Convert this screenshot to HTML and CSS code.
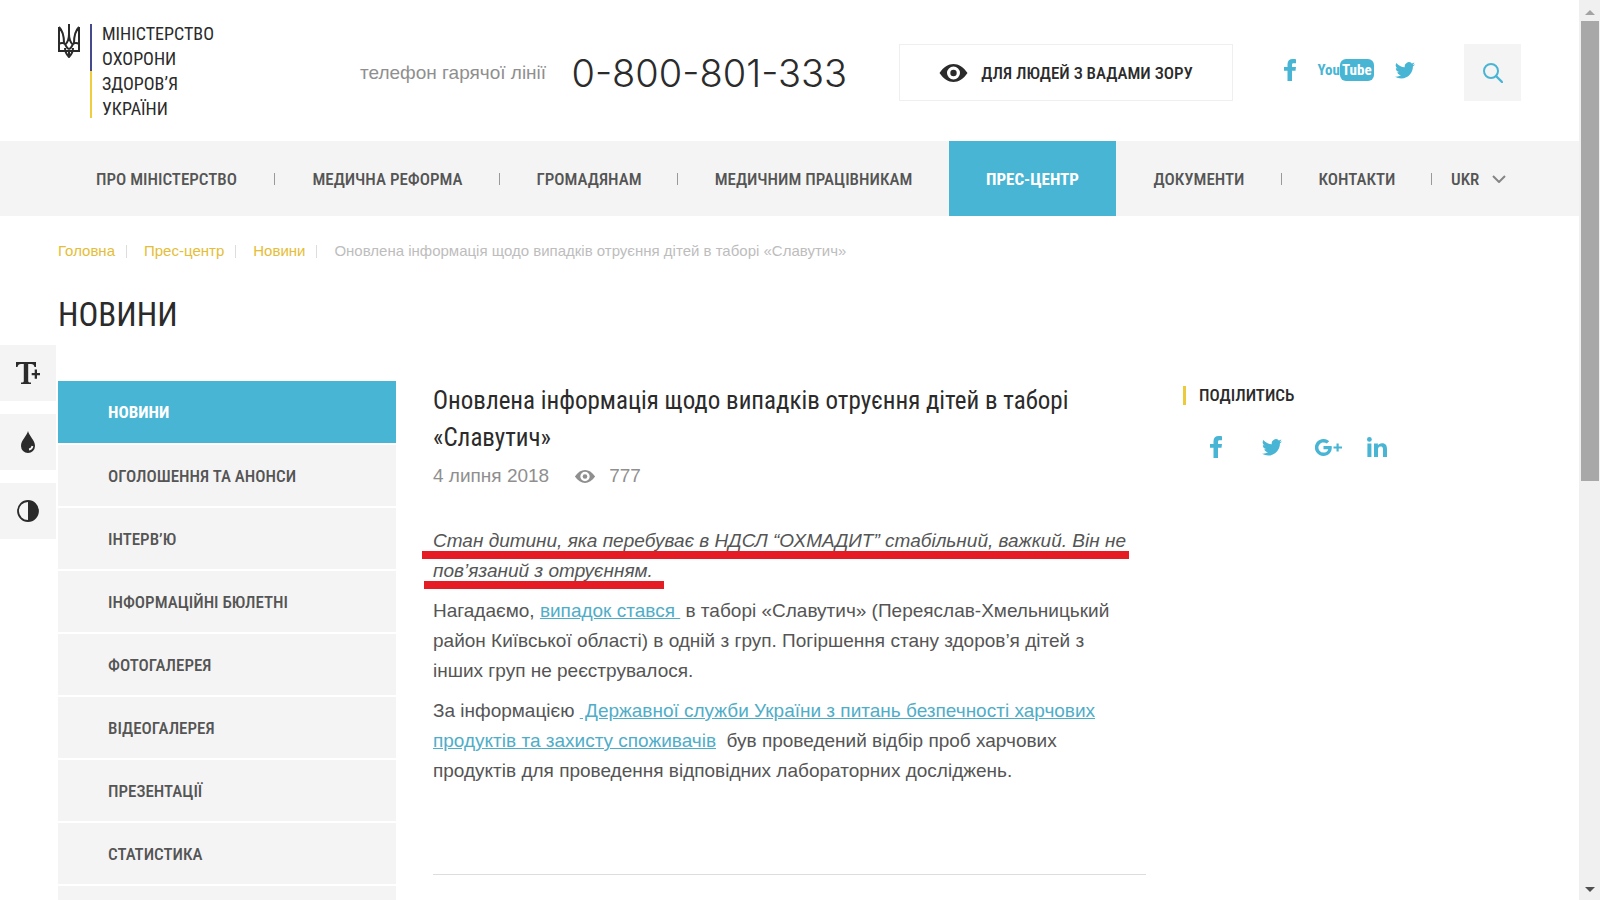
FILE: index.html
```html
<!DOCTYPE html>
<html lang="uk">
<head>
<meta charset="utf-8">
<meta name="viewport" content="width=device-width, initial-scale=1">
<title>Новини</title>
<link rel="stylesheet" href="styles.css">
</head>
<body>
<svg class="sprite" aria-hidden="true">
  <symbol id="i-eye" viewBox="0 0 28 18"><path fill-rule="evenodd" d="M0 9C4 3 9 0 14 0s10 3 14 9c-4 6-9 9-14 9S4 15 0 9zm14-6.500a6.500 6.500 0 1 0 0 13 6.500 6.500 0 0 0 0-13z"/><circle cx="14" cy="9" r="3.200"/></symbol>
  <symbol id="i-fb" viewBox="0 0 12 22"><path d="M12 .2v4H9.700C8.300 4.200 8 4.900 8 5.900V8h4l-.5 3.700H8V22H3.500V11.700H0V8h3.500V5.200C3.500 1.800 5.500 0 8.700 0c1.500 0 2.800.1 3.300.2z"/></symbol>
  <symbol id="i-tw" viewBox="0 0 24 20"><path d="M24 2.400a10 10 0 0 1-2.800.8A5 5 0 0 0 23.300.5a10 10 0 0 1-3.100 1.200 4.900 4.900 0 0 0-8.400 4.500A14 14 0 0 1 1.700 1a4.900 4.900 0 0 0 1.500 6.600A5 5 0 0 1 1 7v.1a4.900 4.900 0 0 0 3.900 4.800 5 5 0 0 1-2.200.1 4.900 4.900 0 0 0 4.600 3.400A9.900 9.900 0 0 1 0 17.400a14 14 0 0 0 7.500 2.200c9.100 0 14-7.500 14-14v-.7A10 10 0 0 0 24 2.400z"/></symbol>
</svg>
<div class="window">
<div class="page">
  <header class="header">
    <a class="logo" href="#">
      <svg class="trident" viewBox="0 0 22 34" fill="none" stroke="#2b2b2b" stroke-width="2" aria-hidden="true"><path d="M1 3v24h6M21 3v24h-6M1 3c4 4 5 9 5 16M21 3c-4 4-5 9-5 16M11 0v14M11 10c0 7-2 9-4 11M11 10c0 7 2 9 4 11M1 20c3-2 6-1 7 2 1 2 2 3 3 3s2-1 3-3c1-3 4-4 7-2M7 24c0 5 2 7 4 9 2-2 4-4 4-9M7 27h8M11 24v8"/></svg>
      <span class="flagline"></span>
      <span class="logo-text">МІНІСТЕРСТВО<br>ОХОРОНИ<br>ЗДОРОВ’Я<br>УКРАЇНИ</span>
    </a>
    <div class="hotline"><span class="hotline-label">телефон гарячої лінії</span><a class="phone" href="tel:0800801333">0-800-801-333</a></div>
    <button class="vision" type="button"><svg class="vision-eye"><use href="#i-eye"/></svg>ДЛЯ ЛЮДЕЙ З ВАДАМИ ЗОРУ</button>
    <div class="social">
      <a href="#" aria-label="Facebook"><svg class="fb"><use href="#i-fb"/></svg></a>
      <a class="youtube" href="#"><span>You</span><span class="tube">Tube</span></a>
      <a href="#" aria-label="Twitter"><svg class="tw"><use href="#i-tw"/></svg></a>
    </div>
    <button class="search" type="button" aria-label="Пошук"><svg viewBox="0 0 20 20" fill="none" stroke="#48b5d4" stroke-width="2"><circle cx="8" cy="8" r="7"/><path d="M13 13l6 6" stroke-linecap="round" stroke-width="2.400"/></svg></button>
  </header>
  <nav class="nav">
    <a href="#">ПРО МІНІСТЕРСТВО</a>
    <a href="#">МЕДИЧНА РЕФОРМА</a>
    <a href="#">ГРОМАДЯНАМ</a>
    <a class="before-active" href="#">МЕДИЧНИМ ПРАЦІВНИКАМ</a>
    <a class="active" href="#">ПРЕС-ЦЕНТР</a>
    <a href="#">ДОКУМЕНТИ</a>
    <a href="#">КОНТАКТИ</a>
    <label class="lang"><select aria-label="Мова"><option>UKR</option><option>ENG</option></select><svg viewBox="0 0 14 8" fill="none" stroke="#858585" stroke-width="2"><path d="M1 1l6 6 6-6"/></svg></label>
  </nav>
  <div class="crumbs"><a href="#">Головна</a><a href="#">Прес-центр</a><a href="#">Новини</a><span>Оновлена інформація щодо випадків отруєння дітей в таборі «Славутич»</span></div>
  <h1>НОВИНИ</h1>
  <main class="content">
    <ul class="side">
      <li><a class="current" href="#">НОВИНИ</a></li>
      <li><a href="#">ОГОЛОШЕННЯ ТА АНОНСИ</a></li>
      <li><a href="#">ІНТЕРВ’Ю</a></li>
      <li><a href="#">ІНФОРМАЦІЙНІ БЮЛЕТНІ</a></li>
      <li><a href="#">ФОТОГАЛЕРЕЯ</a></li>
      <li><a href="#">ВІДЕОГАЛЕРЕЯ</a></li>
      <li><a href="#">ПРЕЗЕНТАЦІЇ</a></li>
      <li><a href="#">СТАТИСТИКА</a></li>
      <li><a href="#" aria-label="Далі"></a></li>
    </ul>
    <article class="article">
      <h2>Оновлена інформація щодо випадків отруєння дітей в таборі «Славутич»</h2>
      <div class="meta"><span>4 липня 2018</span><svg><use href="#i-eye"/></svg><span>777</span></div>
      <p class="lead"><em>Стан дитини, яка перебуває в НДСЛ “ОХМАДИТ” стабільний, важкий. Він не пов’язаний з отруєнням.</em><span class="mark mark-long"></span><span class="mark mark-short"></span></p>
      <p>Нагадаємо, <a href="#">випадок стався&nbsp;</a> в таборі «Славутич» (Переяслав-Хмельницький район Київської області) в одній з груп. Погіршення стану здоров’я дітей з інших груп не реєструвалося.</p>
      <p>За інформацією <a href="#">&nbsp;Державної служби України з питань безпечності харчових продуктів та захисту споживачів</a>&nbsp; був проведений відбір проб харчових продуктів для проведення відповідних лабораторних досліджень.</p>
    </article>
    <aside class="share">
      <h3>ПОДІЛИТИСЬ</h3>
      <div class="share-icons">
        <a href="#" aria-label="Facebook"><svg class="fb"><use href="#i-fb"/></svg></a>
        <a href="#" aria-label="Twitter"><svg class="tw"><use href="#i-tw"/></svg></a>
        <a href="#" aria-label="Google+"><svg class="gp" viewBox="0 0 27 17"><path d="M8.500 7v3.200h4.700c-.5 2.100-2.200 3.400-4.700 3.400a5.100 5.100 0 1 1 3.300-9l2.400-2.300A8.500 8.500 0 1 0 8.500 17c5 0 8.300-3.500 8.300-8.400L16.600 7zM21.500 4.500h2.200v2.900H27v2.200h-3.300v2.900h-2.200V9.600h-3V7.400h3z"/></svg></a>
        <a href="#" aria-label="LinkedIn"><svg class="in" viewBox="0 0 20 20"><circle cx="2.400" cy="2.400" r="2.400"/><path d="M.4 6.500h4V20h-4zM7 6.500h3.900v1.900C11.500 7.200 13 6.200 15 6.200c4 0 5 2.500 5 6.200V20h-4v-6.800c0-1.700 0-3.600-2.400-3.600S11 11.400 11 13.200V20H7z"/></svg></a>
      </div>
    </aside>
  </main>
  <div class="tools">
    <button type="button" aria-label="Розмір тексту"><svg viewBox="0 0 24 22" width="24" height="22"><path d="M0 0h20v5h-1.500c-.4-2-1.300-3-3.500-3h-2.800v17c0 1 .8 1.500 2.800 1.500V22H5v-1.500c2 0 2.800-.5 2.800-1.500V2H5C2.800 2 1.900 3 1.500 5H0zM18.700 7.500h2.300V11h3v2.300h-3v3.500h-2.300v-3.500h-3V11h3z"/></svg></button>
    <button type="button" aria-label="Колір"><svg viewBox="0 0 14 22" width="14" height="22"><path d="M7 0c1 5 7 9 7 15a7 7 0 0 1-14 0C0 9 6 5 7 0z"/><path d="M8 18.500c2-.3 3-1.500 3.500-3.500" fill="none" stroke="#f4f4f4" stroke-width="1.800"/></svg></button>
    <button type="button" aria-label="Контраст"><svg viewBox="0 0 22 22" width="22" height="22"><circle cx="11" cy="11" r="10" fill="none" stroke="#2b2b2b" stroke-width="1.800"/><path d="M11 1a10 10 0 0 1 0 20z"/></svg></button>
  </div>
</div>
<div class="scrollbar" aria-hidden="true"><svg viewBox="0 0 10 5"><path d="M0 5l5-5 5 5z" fill="#a3a3a3"/></svg><span class="thumb"></span><svg class="down" viewBox="0 0 10 5"><path d="M0 0l5 5 5-5z" fill="#505050"/></svg></div>
</div>
</body>
</html>
```
FILE: styles.css
```css
:root {
  --blue: #48b5d4;
  --grey: #f4f4f4;
  --text: #555;
  --dark: #2b2b2b;
  --narrow: "Roboto Condensed", "Liberation Sans Narrow", "Liberation Sans", sans-serif;
}
* { box-sizing: border-box; }
body { margin: 0; background: #fff; color: var(--text); font-family: "Liberation Sans", Arial, sans-serif; }
a { color: inherit; text-decoration: none; }
button { border: 0; padding: 0; color: var(--dark); }
svg { display: block; fill: currentColor; }
h1, h2, h3, p, ul { margin: 0; padding: 0; font-weight: 400; }
.sprite { position: absolute; width: 0; height: 0; }
.window { display: grid; grid-template-columns: 1fr 21px; height: 100vh; overflow: hidden; }
.page { position: relative; overflow: hidden; }

.header { display: flex; align-items: flex-start; height: 141px; padding: 0 58px; }
.logo { display: flex; gap: 10px; padding-top: 24px; width: 302px; color: var(--dark); }
.trident { width: 22px; height: 34px; fill: none; }
.flagline { width: 2px; height: 94px; background: linear-gradient(#454a8c 50%, #f0cd3c 50%); }
.logo-text { font: 18px/25px var(--narrow); margin-top: -3px; }
.hotline { display: flex; align-items: center; justify-content: space-between; width: 487px; height: 58px; margin-top: 44px; }
.hotline-label { font-size: 19px; color: #8f8f8f; }
.phone { font: 300 38px/56px Inter, sans-serif; color: var(--dark); }
.vision { display: flex; align-items: center; justify-content: center; gap: 13px; width: 334px; height: 57px; margin: 44px 0 0 52px; border: 1px solid #efefef; background: #fff; font: 500 17px/24px var(--narrow); }
.vision-eye { width: 29px; height: 18px; }
.social { display: flex; align-items: center; justify-content: space-between; flex: 0 0 131px; height: 24px; margin: 58px 0 0 51px; color: var(--blue); }
.fb { width: 12px; height: 22px; }
.tw { width: 20px; height: 17px; }
.youtube { display: flex; align-items: center; font: bold 15px/22px var(--narrow); }
.tube { padding: 0 2px; border-radius: 6px; background: var(--blue); color: #fff; }
.search { display: grid; place-items: center; width: 57px; height: 57px; margin: 44px 0 0 auto; background: var(--grey); }
.search svg { width: 20px; height: 20px; fill: none; }

.nav { display: grid; grid-template-columns: 217fr 225fr 178fr 271fr 167fr 166fr 150fr 89fr; height: 75px; padding: 0 58px; background: var(--grey); font: 500 17px/24px var(--narrow); }
.nav a { display: grid; place-items: center; white-space: nowrap; background: linear-gradient(#999, #999) right center / 1px 12px no-repeat; }
.nav .before-active { background: none; }
.nav .active { background: var(--blue); color: #fff; font-weight: bold; }
.lang { display: flex; align-items: center; justify-content: space-between; padding: 0 15px 0 19px; }
.lang select { appearance: none; border: 0; padding: 0; background: none; color: var(--text); font: inherit; }
.lang svg { width: 14px; height: 8px; fill: none; }

.crumbs { display: flex; align-items: center; padding: 24px 58px 0; font-size: 15px; line-height: 22px; color: #bdbdbd; }
.crumbs a { margin-right: 17px; padding-right: 12px; color: #e5bd36; background: linear-gradient(#ddd, #ddd) right center / 1px 13px no-repeat; }
h1 { padding: 32px 58px 0; font: 33px/42px var(--narrow); color: var(--dark); }

.content { display: grid; grid-template-columns: 338px 713px 1fr; gap: 37px; padding: 45px 58px 0; }
.side { display: grid; gap: 2px; align-content: start; list-style: none; }
.side a { display: flex; align-items: center; height: 61px; padding-left: 50px; background: var(--grey); font: 500 17px/24px var(--narrow); }
.side .current { height: 62px; background: var(--blue); color: #fff; font-weight: bold; }
.article { align-self: start; padding-bottom: 88px; border-bottom: 1px solid #ddd; font-size: 19px; line-height: 30px; }
.article h2 { padding-top: 1px; font: 25px/37px var(--narrow); color: var(--dark); }
.meta { display: flex; align-items: center; gap: 12px; padding: 5px 0 25px; color: #8f8f8f; }
.meta svg { width: 24px; height: 13px; margin-left: 12px; }
.article p { margin-top: 10px; padding-right: 16px; }
.article p a { color: #4fadc8; text-decoration: underline; }
.lead { position: relative; }
.mark { position: absolute; height: 8px; background: #e61c24; }
.mark-long { left: -11px; right: 17px; top: 25px; }
.mark-short { left: -9px; width: 240px; top: 55px; }
.share h3 { border-left: 3px solid #ebcb3c; padding-left: 13px; margin-top: 5px; font: 500 17px/19px var(--narrow); color: var(--dark); }
.share-icons { display: grid; grid-template-columns: 56px 56px 57px 40px; place-items: center; margin: 31px 0 0 5px; justify-content: start; color: var(--blue); }
.gp { width: 27px; height: 17px; }
.in { width: 20px; height: 20px; }

.tools { position: absolute; left: 0; top: 345px; display: grid; gap: 13px; }
.tools button { display: grid; place-items: center; width: 56px; height: 56px; background: var(--grey); }
.scrollbar { display: flex; flex-direction: column; align-items: center; padding: 10px 1px 8px 2px; background: #f0f0f0; }
.scrollbar svg { width: 10px; height: 5px; }
.thumb { width: 100%; height: 460px; margin-top: 6px; background: #a8a8a8; }
.scrollbar .down { margin-top: auto; }
```
